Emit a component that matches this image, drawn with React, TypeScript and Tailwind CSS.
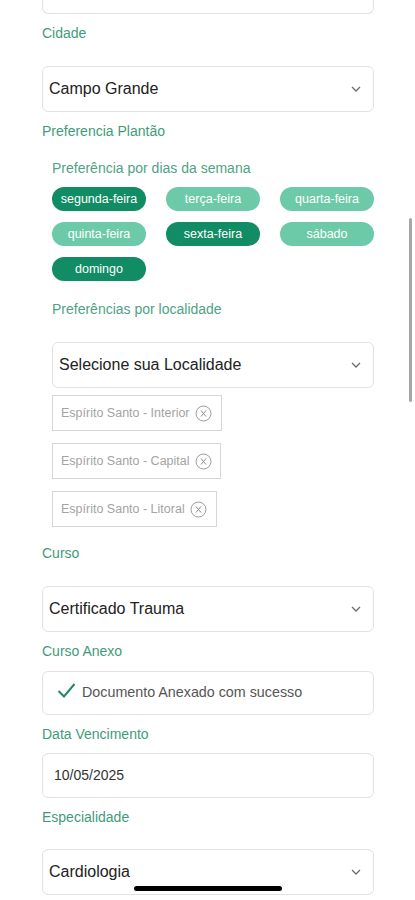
const font = { fontFamily: '"Liberation Sans", Arial, sans-serif' };

const Chevron: React.FC = () => (
  <svg width="10" height="6" viewBox="0 0 10 6" className="shrink-0">
    <polyline points="1,1 5,5 9,1" fill="none" stroke="#6b6b6b" strokeWidth="1.3" />
  </svg>
);

const Label: React.FC<{ text: string; className?: string }> = ({ text, className }) => (
  <p className={`h-5 leading-5 text-[14px] text-[#3f9b7a] ${className ?? ""}`}>{text}</p>
);

const Select: React.FC<{ value: string; className?: string; textClass?: string }> = ({
  value,
  className,
  textClass,
}) => (
  <div
    className={`h-[46px] flex items-center justify-between pl-[6px] pr-[12px] border border-[#e2e2e2] rounded-[6px] bg-white ${className ?? ""}`}
  >
    <span className={`text-[16px] text-[#222] ${textClass ?? ""}`}>{value}</span>
    <Chevron />
  </div>
);

const days = [
  { name: "segunda-feira", on: true },
  { name: "terça-feira", on: false },
  { name: "quarta-feira", on: false },
  { name: "quinta-feira", on: false },
  { name: "sexta-feira", on: true },
  { name: "sábado", on: false },
  { name: "domingo", on: true },
];

const places = [
  { name: "Espírito Santo - Interior", w: "w-[170px]" },
  { name: "Espírito Santo - Capital", w: "w-[169px]" },
  { name: "Espírito Santo - Litoral", w: "w-[165px]" },
];

const Tag: React.FC<{ name: string; w: string }> = ({ name, w }) => (
  <div className={`h-[36px] ${w} flex items-center gap-[5px] pl-[8px] border border-[#d6d6d6] bg-white`}>
    <span className="text-[12.5px] text-[#a3a3a3] whitespace-nowrap">{name}</span>
    <svg width="17" height="17" viewBox="0 0 17 17" className="shrink-0">
      <circle cx="8.5" cy="8.5" r="7.5" fill="none" stroke="#9a9a9a" strokeWidth="1" />
      <path d="M6 5.5 L11 11.5 M11 5.5 L6 11.5" stroke="#8a8a8a" strokeWidth="1" />
    </svg>
  </div>
);

export default function App() {
  return (
    <div className="relative w-[415px] h-[900px] overflow-hidden bg-white" style={font}>
      <div className="pr-[41px] pl-[42px]">
        <div className="h-[14px] border border-t-0 border-[#e2e2e2] rounded-b-[6px]" />

        <Label text="Cidade" className="mt-[9px]" />
        <Select value="Campo Grande" className="mt-[23px]" />

        <Label text="Preferencia Plantão" className="mt-[9px]" />

        <div className="pl-[10px]">
          <Label text="Preferência por dias da semana" className="mt-[17px] text-[#4fa286]" />
          <div className="mt-[9px] grid grid-cols-3 gap-x-[20px] gap-y-[11px]">
            {days.map((d) => (
              <div
                key={d.name}
                className={`h-[24px] rounded-full flex items-center justify-center text-[12.5px] font-medium text-white ${
                  d.on ? "bg-[#128c64]" : "bg-[#6dcaa9]"
                }`}
              >
                {d.name}
              </div>
            ))}
          </div>

          <Label text="Preferências por localidade" className="mt-[18px] text-[#4fa286]" />
          <Select value="Selecione sua Localidade" className="mt-[23px]" textClass="text-[16.5px] text-[#1a1a1a]" />
          <div className="mt-[7px] flex flex-col gap-[12px]">
            {places.map((p) => (
              <Tag key={p.name} name={p.name} w={p.w} />
            ))}
          </div>
        </div>

        <Label text="Curso" className="mt-[16px]" />
        <Select value="Certificado Trauma" className="mt-[23px]" />

        <Label text="Curso Anexo" className="mt-[9px]" />
        <div className="mt-[10px] h-[44px] flex items-center gap-[6px] pl-[14px] border border-[#e2e2e2] rounded-[6px]">
          <svg width="19" height="17" viewBox="0 0 19 17" className="-mt-[6px]">
            <polyline points="1.5,9 7,14.5 17.5,2" fill="none" stroke="#1f8a62" strokeWidth="2" />
          </svg>
          <span className="text-[14.3px] text-[#555]">Documento Anexado com sucesso</span>
        </div>

        <Label text="Data Vencimento" className="mt-[9px]" />
        <div className="mt-[9px] h-[45px] flex items-center pl-[11px] border border-[#e2e2e2] rounded-[6px]">
          <span className="text-[14px] text-[#333]">10/05/2025</span>
        </div>

        <Label text="Especialidade" className="mt-[9px]" />
        <Select value="Cardiologia" className="mt-[22px]" />
      </div>

      <div className="absolute left-[409px] top-[218px] w-[3px] h-[184px] rounded-full bg-[#a6a6a6]" />
      <div className="absolute left-[134px] top-[886px] w-[148px] h-[5px] rounded-full bg-black" />
    </div>
  );
}
